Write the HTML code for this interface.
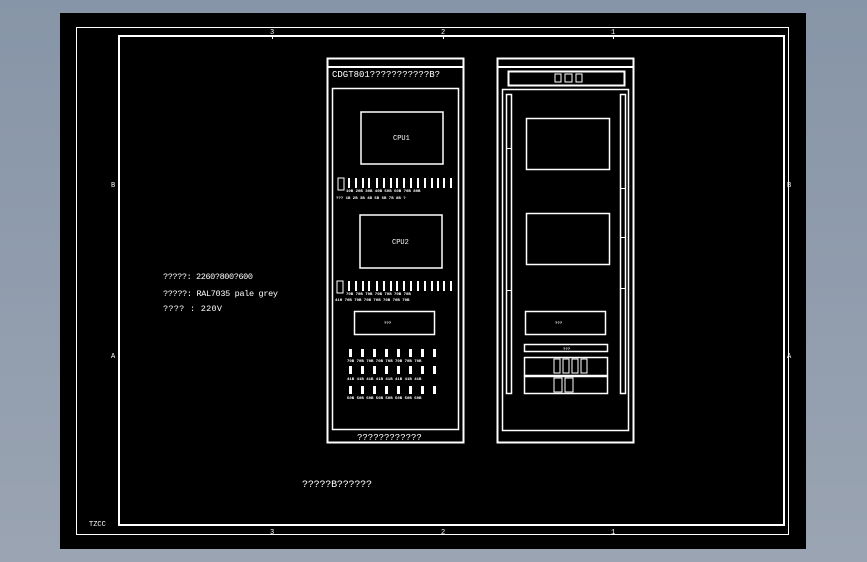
<!DOCTYPE html>
<html><head><style>
html,body{margin:0;padding:0;width:867px;height:562px;overflow:hidden;background:linear-gradient(#8795a8,#9aa4b2);}
svg{position:absolute;left:0;top:0}
text{font-family:"Liberation Mono",monospace;fill:#fff}
</style></head><body>
<svg width="867" height="562" viewBox="0 0 867 562">
<rect x="60" y="13" width="746" height="536" fill="#000"/>
<g fill="none" stroke="#fff">
<rect x="76.5" y="27.5" width="712" height="507" stroke-width="1"/>
<rect x="119" y="36" width="665" height="489" stroke-width="2"/>
<rect x="327.5" y="58.5" width="136" height="384" stroke-width="2"/>
<line x1="327" y1="67" x2="464" y2="67" stroke-width="2"/>
<rect x="332.5" y="88.5" width="126" height="341" stroke-width="1.5"/>
<rect x="361" y="112" width="82" height="52" stroke-width="1.5"/>
<rect x="360" y="215" width="82" height="53" stroke-width="1.5"/>
<rect x="354.5" y="311.5" width="80" height="23" stroke-width="1.5"/>
<rect x="338" y="178" width="6" height="12"/>
<rect x="337" y="281" width="6" height="12"/>
<rect x="497.5" y="58.5" width="136" height="384" stroke-width="2"/>
<line x1="497" y1="67" x2="634" y2="67" stroke-width="2"/>
<rect x="508.5" y="71.5" width="116" height="14" stroke-width="2"/>
<rect x="502.5" y="89.5" width="126" height="341" stroke-width="1.5"/>
<rect x="506.5" y="94.5" width="5" height="299" stroke-width="1.5"/>
<rect x="620.5" y="94.5" width="5" height="299" stroke-width="1.5"/>
<rect x="526.5" y="118.5" width="83" height="51" stroke-width="1.5"/>
<rect x="526.5" y="213.5" width="83" height="51" stroke-width="1.5"/>
<rect x="525.5" y="311.5" width="80" height="23" stroke-width="1.5"/>
<rect x="524.5" y="344.5" width="83" height="7" stroke-width="1.5"/>
<rect x="524.5" y="357.5" width="83" height="18" stroke-width="1.5"/>
<rect x="524.5" y="376.5" width="83" height="17" stroke-width="1.5"/>
<rect x="555" y="74" width="6" height="8"/><rect x="565" y="74" width="7" height="8"/><rect x="576" y="74" width="6" height="8"/>
<rect x="554" y="359" width="6" height="14"/><rect x="563" y="359" width="6" height="14"/><rect x="572" y="359" width="6" height="14"/><rect x="581" y="359" width="6" height="14"/>
<rect x="554" y="378" width="8" height="14"/><rect x="565" y="378" width="8" height="14"/>
</g>
<g fill="#fff">
<rect x="272" y="36" width="1" height="3"/><rect x="443" y="36" width="1" height="3"/><rect x="613" y="36" width="1" height="3"/>
<rect x="506" y="148" width="5" height="1"/><rect x="506" y="290" width="5" height="1"/><rect x="620" y="188" width="5" height="1"/><rect x="620" y="237" width="5" height="1"/><rect x="620" y="288" width="5" height="1"/>
<g id="r1"><rect x="348" y="178" width="2" height="10"/><rect x="355" y="178" width="2" height="10"/><rect x="362" y="178" width="2" height="10"/><rect x="368" y="178" width="2" height="10"/><rect x="376" y="178" width="2" height="10"/><rect x="383" y="178" width="2" height="10"/><rect x="390" y="178" width="2" height="10"/><rect x="396" y="178" width="2" height="10"/><rect x="403" y="178" width="2" height="10"/><rect x="410" y="178" width="2" height="10"/><rect x="417" y="178" width="2" height="10"/><rect x="424" y="178" width="2" height="10"/><rect x="431" y="178" width="2" height="10"/><rect x="437" y="178" width="2" height="10"/><rect x="443" y="178" width="2" height="10"/><rect x="450" y="178" width="2" height="10"/></g>
<use href="#r1" y="103"/>
<g id="r3"><rect x="349" y="349" width="3" height="8"/><rect x="361" y="349" width="3" height="8"/><rect x="373" y="349" width="3" height="8"/><rect x="385" y="349" width="3" height="8"/><rect x="397" y="349" width="3" height="8"/><rect x="409" y="349" width="3" height="8"/><rect x="421" y="349" width="3" height="8"/><rect x="433" y="349" width="3" height="8"/></g>
<use href="#r3" y="17"/><use href="#r3" y="37"/>
</g>
<g font-size="4" font-weight="bold">
<text x="346" y="192">10B 20B 30B 40B 50B 60B 70B 80B</text>
<text x="336" y="199">??? 1B 2B 3B 4B 5B 6B 7B 8B ?</text>
<text x="346" y="295">70B 70B 70B 70B 70B 70B 70B</text>
<text x="335" y="301">41H 70B 70B 70B 70B 70B 70B 70B</text>
<text x="347" y="362">70B 70B 70B 70B 70B 70B 70B 70B</text>
<text x="347" y="380">41B 41B 41B 41B 41B 41B 41B 41B</text>
<text x="347" y="399">50B 50B 50B 50B 50B 50B 50B 50B</text>
<text x="384" y="324">???</text><text x="555" y="324">???</text>
<text x="563" y="350">???</text>
</g>
<g font-size="7">
<text x="270" y="34">3</text><text x="441" y="34">2</text><text x="611" y="34">1</text>
<text x="270" y="534">3</text><text x="441" y="534">2</text><text x="611" y="534">1</text>
<text x="111" y="187">B</text><text x="111" y="358">A</text>
<text x="787" y="187">B</text><text x="787" y="358">A</text>
<text x="89" y="526">TZCC</text>
<text x="393" y="140">CPU1</text><text x="392" y="244">CPU2</text>
</g>
<text x="332" y="77" font-size="9">CDGT801???????????B?</text>
<text x="357" y="440" font-size="9">????????????</text>
<g font-size="8.5" font-family="Liberation Serif">
<text x="163" y="279" textLength="90">?????:  2260?800?600</text>
<text x="163" y="296" textLength="115">?????:  RAL7035 pale grey</text>
<text x="163" y="311" textLength="59">???? :   220V</text>
<text x="302" y="487" font-size="10" textLength="70">?????B??????</text>
</g>
</svg>
</body></html>
